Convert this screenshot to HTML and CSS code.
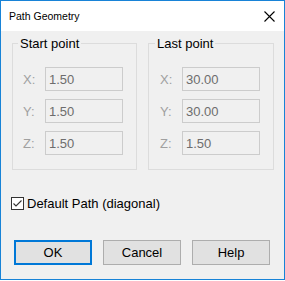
FILE: index.html
```html
<!DOCTYPE html>
<html>
<head>
<meta charset="utf-8">
<link rel="stylesheet" href="styles.css">
</head>
<body>
<div class="window">
  <div class="titlebar">
    <span class="title">Path Geometry</span>
    <svg class="close" width="11" height="11" viewBox="0 0 11 11"><path d="M0.5 0.5L10.5 10.5M10.5 0.5L0.5 10.5" stroke="#000" stroke-width="1.1" fill="none"/></svg>
  </div>
  <div class="client">
    <div class="groups">
      <fieldset class="group">
        <legend>Start point</legend>
        <label class="axis">X:</label><input class="field" value="1.50" disabled>
        <label class="axis">Y:</label><input class="field" value="1.50" disabled>
        <label class="axis">Z:</label><input class="field" value="1.50" disabled>
      </fieldset>
      <fieldset class="group group-last">
        <legend>Last point</legend>
        <label class="axis">X:</label><input class="field" value="30.00" disabled>
        <label class="axis">Y:</label><input class="field" value="30.00" disabled>
        <label class="axis">Z:</label><input class="field" value="1.50" disabled>
      </fieldset>
    </div>
    <label class="check">
      <span class="box"><svg width="11" height="11" viewBox="0 0 11 11"><path d="M1.5 5.5L4 8L9.5 2.5" stroke="#333" stroke-width="1.1" fill="none"/></svg></span>
      <span>Default Path (diagonal)</span>
    </label>
    <div class="buttons">
      <button class="btn btn-default">OK</button>
      <button class="btn">Cancel</button>
      <button class="btn">Help</button>
    </div>
  </div>
</div>
</body>
</html>
```
FILE: styles.css
```css
html, body {
  margin: 0;
  padding: 0;
  background: #ffffff;
}
body {
  font-family: "Liberation Sans", Arial, sans-serif;
  font-size: 13px;
  color: #000;
}
.window {
  width: 285px;
  height: 280px;
  box-sizing: border-box;
  border: 1px solid #1883d7;
  display: flex;
  flex-direction: column;
}
.titlebar {
  height: 30px;
  background: #ffffff;
  display: flex;
  align-items: center;
  justify-content: space-between;
  padding: 0 9px 0 8px;
  flex: none;
}
.title {
  font-size: 10.5px;
  color: #000;
}
.close {
  display: block;
}
.client {
  flex: 1;
  background: #f0f0f0;
  padding: 5px 10px 0 11px;
  display: flex;
  flex-direction: column;
}
.groups {
  display: flex;
  gap: 11px;
}
.group {
  margin: 0;
  width: 125px;
  box-sizing: border-box;
  border: 1px solid #dcdcdc;
  padding: 16px 0 14px 10px;
  display: grid;
  grid-template-columns: 22px 78px;
  grid-auto-rows: 24px;
  row-gap: 8px;
  align-items: center;
}
.group-last {
  width: 126px;
  padding-left: 11px;
}
.group legend {
  line-height: 15px;
  padding: 0 2px;
  margin-left: -5px;
  font-size: 13px;
  color: #000;
}
.axis {
  color: #a0a0a0;
  line-height: 15px;
}
.field {
  box-sizing: border-box;
  width: 78px;
  height: 24px;
  margin: 0;
  border: 1px solid #cccccc;
  background: #f0f0f0;
  color: #6d6d6d;
  -webkit-text-fill-color: #6d6d6d;
  opacity: 1;
  font-family: "Liberation Sans", Arial, sans-serif;
  font-size: 13px;
  padding: 0 3px;
  outline: none;
}
.check {
  display: flex;
  align-items: center;
  height: 15px;
  margin-top: 26px;
  margin-left: -1px;
  gap: 3px;
  line-height: 15px;
}
.box {
  width: 13px;
  height: 13px;
  box-sizing: border-box;
  border: 1px solid #333333;
  background: #ffffff;
  display: flex;
  align-items: center;
  justify-content: center;
}
.box svg {
  display: block;
}
.buttons {
  display: flex;
  gap: 11px;
  margin-top: 29px;
  margin-left: 2px;
}
.btn {
  width: 78px;
  height: 25px;
  box-sizing: border-box;
  border: 1px solid #adadad;
  background: #e1e1e1;
  font-family: "Liberation Sans", Arial, sans-serif;
  font-size: 13px;
  color: #000;
  padding: 0;
  margin: 0;
}
.btn-default {
  border: 2px solid #0078d7;
}
```
